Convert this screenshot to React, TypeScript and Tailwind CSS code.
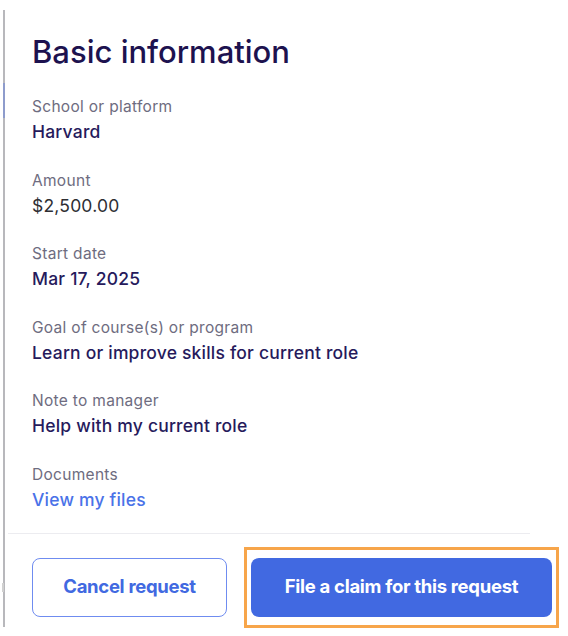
import React from "react";

const rows: { label: string; value: string; cls: string }[] = [
  { label: "School or platform", value: "Harvard", cls: "text-[#261a5c] font-medium" },
  { label: "Amount", value: "$2,500.00", cls: "text-[#2e2e33] font-normal" },
  { label: "Start date", value: "Mar 17, 2025", cls: "text-[#261a5c] font-medium" },
  { label: "Goal of course(s) or program", value: "Learn or improve skills for current role", cls: "text-[#261a5c] font-medium" },
  { label: "Note to manager", value: "Help with my current role", cls: "text-[#261a5c] font-medium" },
  { label: "Documents", value: "View my files", cls: "text-[#4a72e8] font-medium" },
];

export default function App() {
  return (
    <div className="w-[568px] h-[636px] bg-white overflow-hidden font-['Inter',sans-serif]">
      <div className="relative ml-[3px] mt-[10px] h-[617px] border-l-2 border-[#b8b8bc]">
        <div className="absolute left-[-2px] top-[73px] w-[2px] h-[35px] bg-[#8e9ccc]" />
        <div className="absolute left-[-3px] top-[573px] w-[2px] h-[9px] bg-[#d0d0d0]" />
        <div className="pl-[27px] pt-[24px]">
          <h1 className="text-[31px] leading-[36px] font-medium text-[#1d124f] tracking-[0px]">
            Basic information
          </h1>
          <div className="mt-[27px] flex flex-col gap-[26.5px]">
            {rows.map((r) => (
              <div key={r.label} className="flex flex-col gap-[3px]">
                <div className="text-[15.5px] leading-[20px] text-[#6e6c80] tracking-[0.3px]">{r.label}</div>
                <div className={`text-[17.5px] leading-[24px] tracking-[0.2px] ${r.cls}`}>{r.value}</div>
              </div>
            ))}
          </div>
        </div>
        <div className="ml-[3px] mt-[21px] w-[522px] h-px bg-[#ececf0]" />
        <div className="flex items-center pl-[27px] mt-[13px] gap-[17px]">
          <button className="w-[195px] h-[59px] rounded-[8px] border border-[#6f8cf0] bg-white text-[#4169e1] text-[18.5px] font-bold tracking-[-0.3px]">
            Cancel request
          </button>
          <div className="px-[4px] py-[8px] border-[3px] border-[#f7a54a]">
            <button className="w-[301px] h-[59px] rounded-[8px] bg-[#4169e1] text-white text-[18.5px] font-bold tracking-[-0.3px]">
              File a claim for this request
            </button>
          </div>
        </div>
      </div>
    </div>
  );
}
